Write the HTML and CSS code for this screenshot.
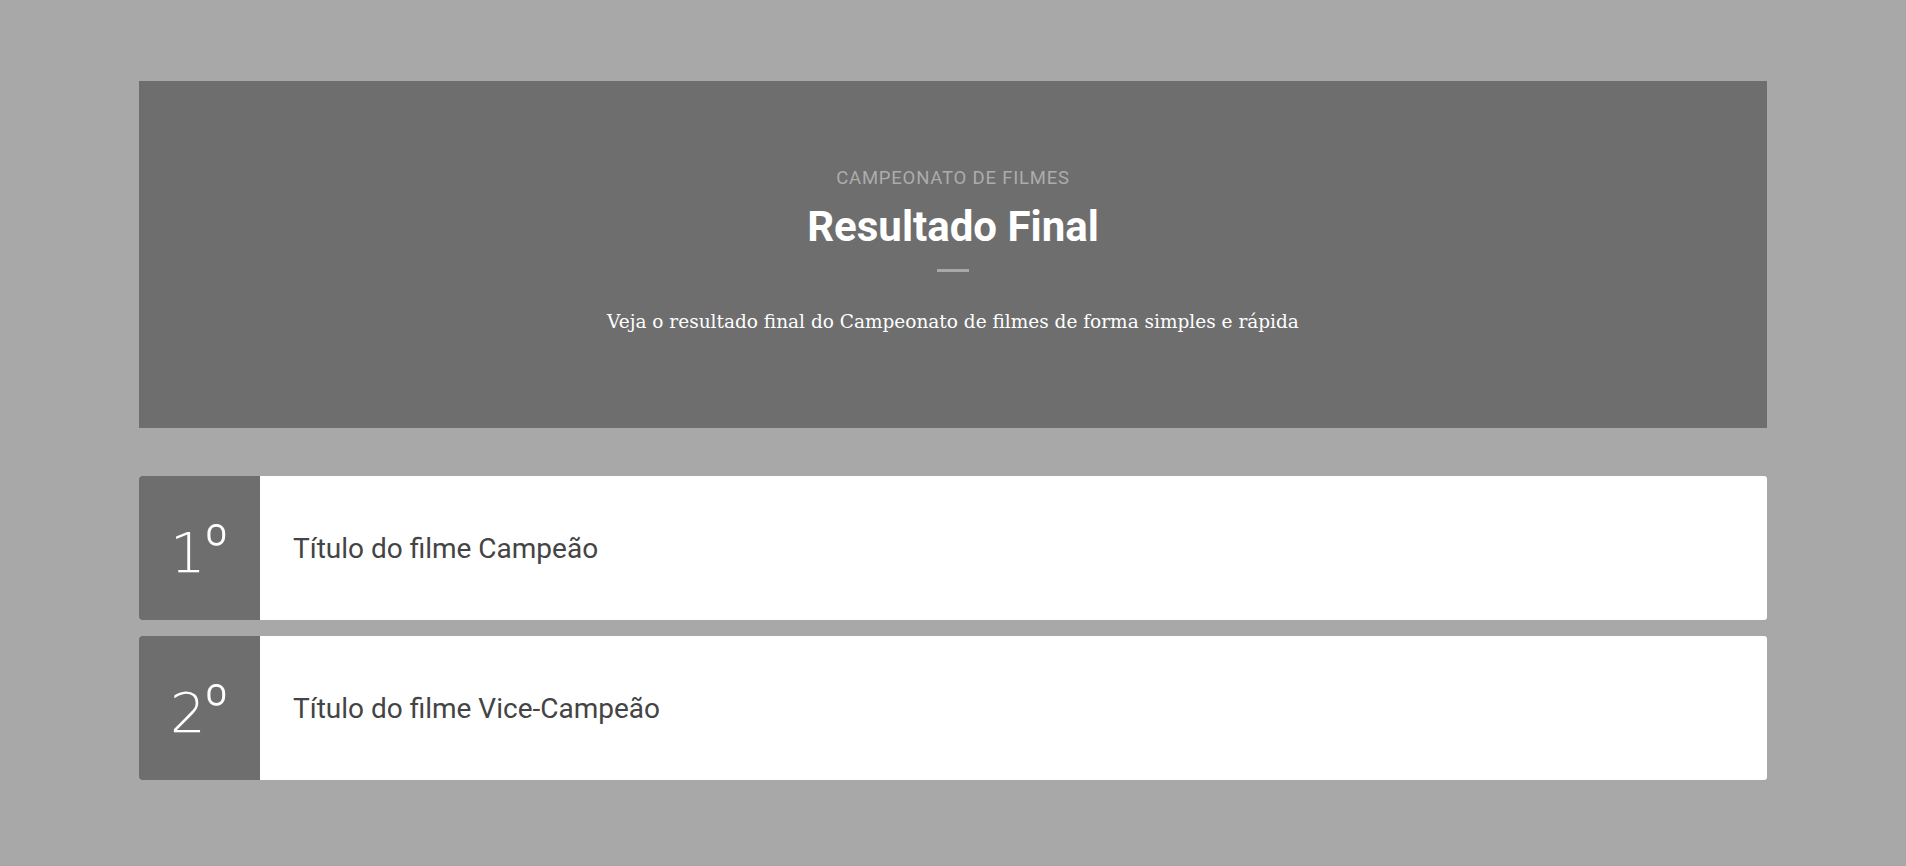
FILE: index.html
```html
<!DOCTYPE html>
<html lang="pt-BR">
<head>
<meta charset="utf-8">
<title>Resultado Final</title>
<link rel="stylesheet" href="styles.css">
</head>
<body>
<main class="page">
  <header class="hero">
    <p class="hero-kicker">CAMPEONATO DE FILMES</p>
    <h1 class="hero-title">Resultado Final</h1>
    <div class="hero-divider"></div>
    <p class="hero-sub">Veja o resultado final do Campeonato de filmes de forma simples e rápida</p>
  </header>
  <section class="results">
    <div class="result">
      <div class="rank"><span class="rank-label">1<span class="rank-ord">º</span></span></div>
      <div class="result-title">Título do filme Campeão</div>
    </div>
    <div class="result">
      <div class="rank"><span class="rank-label">2<span class="rank-ord">º</span></span></div>
      <div class="result-title">Título do filme Vice-Campeão</div>
    </div>
  </section>
</main>
</body>
</html>
```
FILE: styles.css
```css
html, body {
  margin: 0;
  padding: 0;
}
body {
  background: #a8a8a8;
  font-family: Roboto, "Liberation Sans", sans-serif;
}
.page {
  padding: 81px 139px 0;
}
.hero {
  background: #6e6e6e;
  height: 347px;
  box-sizing: border-box;
  padding-top: 84px;
  text-align: center;
}
.hero-kicker {
  margin: 0;
  font-size: 18.5px;
  line-height: 27px;
  color: #acacac;
  font-weight: 400;
  letter-spacing: 0.8px;
}
.hero-title {
  margin: 11px 0 0;
  font-size: 42px;
  line-height: 48px;
  font-weight: 700;
  color: #ffffff;
}
.hero-divider {
  width: 32px;
  height: 3px;
  background: #a8a8a8;
  margin: 18px auto 0;
}
.hero-sub {
  margin: 36px 0 0;
  font-family: "DejaVu Serif", serif;
  font-size: 18.5px;
  line-height: 27px;
  color: #ffffff;
}
.results {
  margin-top: 48px;
  display: flex;
  flex-direction: column;
  gap: 16px;
}
.result {
  display: flex;
  height: 144px;
  background: #ffffff;
  border-radius: 3px;
  overflow: hidden;
}
.rank {
  width: 121px;
  flex: none;
  background: #6e6e6e;
  display: flex;
  align-items: center;
  justify-content: center;
  color: #ffffff;
}
.rank-label {
  font-family: "DejaVu Sans", sans-serif;
  font-weight: 200;
  font-size: 56px;
  line-height: 1;
  margin-top: 1px;
}
.rank-ord {
  font-family: Roboto, sans-serif;
  font-weight: 300;
  font-size: 56px;
  vertical-align: 8px;
  margin-left: -2px;
}
.result-title {
  display: flex;
  align-items: center;
  padding-left: 33px;
  font-size: 28px;
  color: #444444;
}
```
